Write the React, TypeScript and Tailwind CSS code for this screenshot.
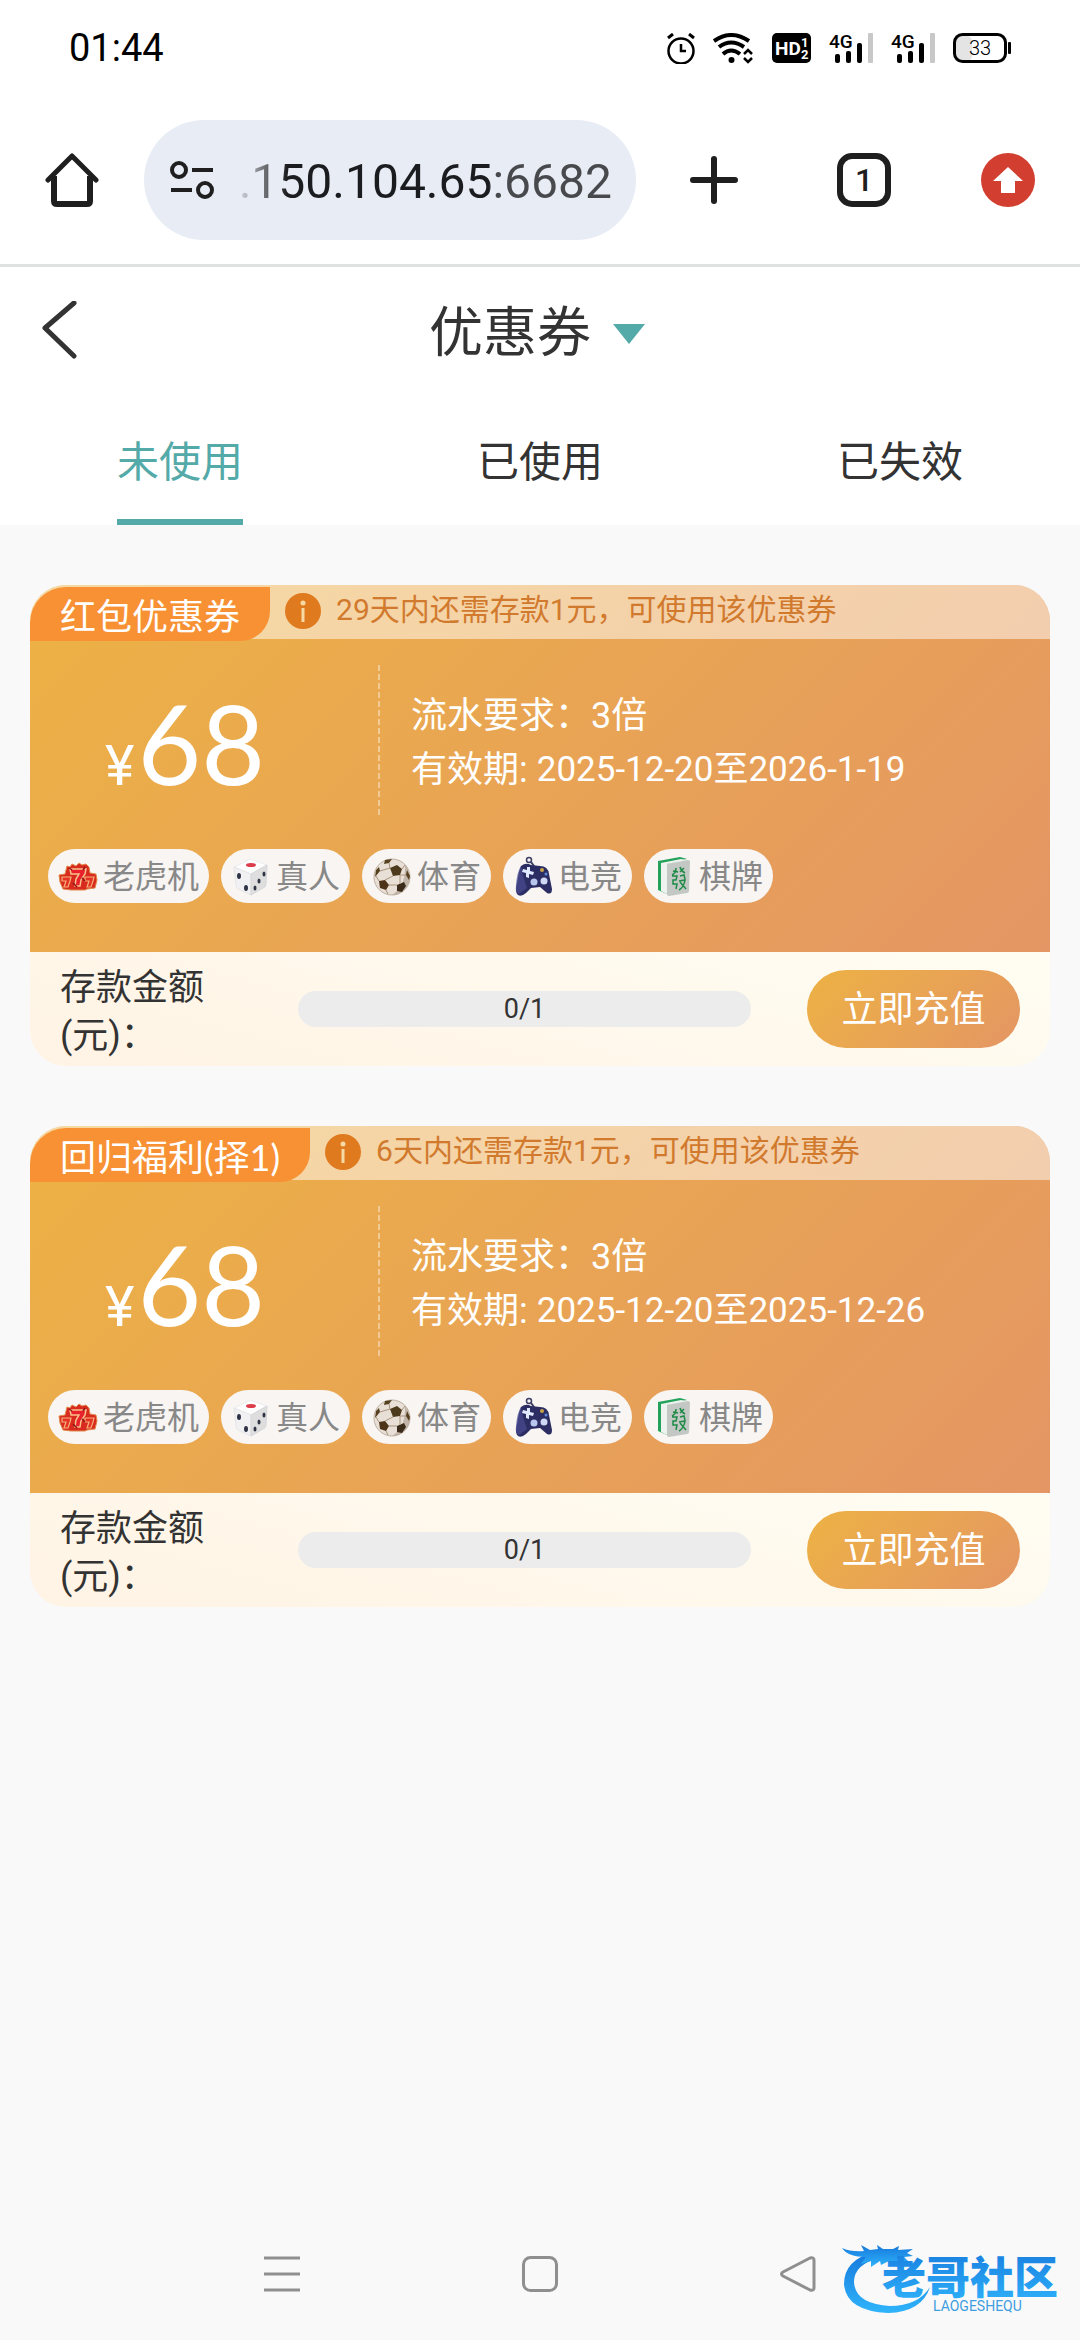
import type { ComponentType } from "react";

interface Coupon {
	id: number;
	title: string;
	notice: string;
	amount: number;
	turnover: string;
	period: string;
	deposited: number;
	target: number;
}

const coupons: Coupon[] = [
	{
		id: 1,
		title: "红包优惠券",
		notice: "29天内还需存款1元，可使用该优惠券",
		amount: 68,
		turnover: "3倍",
		period: "2025-12-20至2026-1-19",
		deposited: 0,
		target: 1,
	},
	{
		id: 2,
		title: "回归福利(择1)",
		notice: "6天内还需存款1元，可使用该优惠券",
		amount: 68,
		turnover: "3倍",
		period: "2025-12-20至2025-12-26",
		deposited: 0,
		target: 1,
	},
];

const tabs = ["未使用", "已使用", "已失效"];

function SlotIcon() {
	return (
		<svg viewBox="0 0 40 40" className="size-[40px]" aria-hidden="true">
			<path
				d="M9 10l3 1 2-3 4 2 3-3 3 2 4-1 3 3 1 6 6 1 1 6-2 8-8 1-2 1-14 0-8-1-3-7-1-7 6-1z"
				fill="#d92a20"
				stroke="#e0894a"
				strokeWidth="1"
			/>
			<path d="M12 13h16l-1 5-4 6-1 6h-5l1-7 3-5h-8z" fill="#e8212c" stroke="#f7c08a" strokeWidth="1.5" />
			<path d="M4 21h9l-1 4-2 6H6l2-6H4z" fill="#e43226" stroke="#f5b277" strokeWidth="1.2" />
			<path d="M27 21h9l-1 4-2 6h-4l2-6h-4z" fill="#e43226" stroke="#f5b277" strokeWidth="1.2" />
			<path d="M11 12l3 2M27 11l-2 3M15 27l4 4M24 22l3 3" stroke="#8f1414" strokeWidth="1.5" />
		</svg>
	);
}

function DiceIcon() {
	return (
		<svg viewBox="0 0 40 40" className="size-[40px]" aria-hidden="true">
			<path d="M3 11L19 3l17 6-16 9z" fill="#fdfdfd" stroke="#ececee" strokeWidth="1" strokeLinejoin="round" />
			<path d="M3 11l17 7v21L7 33q-2-1-2-4z" fill="#f1f1f3" stroke="#e6e6e9" strokeWidth="1" strokeLinejoin="round" />
			<path d="M20 18l16-9-1 19q0 3-3 4l-12 7z" fill="#dededf" stroke="#d6d6da" strokeWidth="1" strokeLinejoin="round" />
			<ellipse cx="20" cy="9" rx="5" ry="2" fill="#dd3c4b" />
			<ellipse cx="8" cy="20" rx="2" ry="3" fill="#2f3445" />
			<ellipse cx="15" cy="32" rx="2" ry="3" fill="#2f3445" />
			<ellipse cx="33" cy="18" rx="1.5" ry="2.5" fill="#2f3445" />
			<ellipse cx="28" cy="25" rx="1.5" ry="2.5" fill="#2f3445" />
			<ellipse cx="24" cy="32" rx="1.5" ry="2.5" fill="#2f3445" />
		</svg>
	);
}

function BallIcon() {
	return (
		<svg viewBox="0 0 40 40" className="size-[40px]" aria-hidden="true">
			<circle cx="20" cy="21" r="18" fill="#e8dfd6" stroke="#bfb1a3" strokeWidth="1" />
			<path d="M33 9a18 18 0 0 1-13 30q14-8 13-30z" fill="#a99a8b" opacity="0.6" />
			<path d="M18 12l7-3 5 4-2 6-7 1z" fill="#4d3a1c" />
			<path d="M7 25l6-1 4 5-3 5-6-2z" fill="#4d3318" />
			<path d="M25 29l7-3 2 4-4 6-5-1z" fill="#3b2b1a" />
			<path d="M13 4l7-1-3 4-5 1zM4 14l3-3 1 4-5 6zM35 14l3 6-1 4-3-5z" fill="#55401f" />
			<path
				d="M17 7l1 5M8 15l10-3M21 20l-8 4M28 19l6 0M28 19l0 9M17 29l8 0M7 25l-3-5M30 13l3-4M16 38l-2-4"
				stroke="#a8937d"
				strokeWidth="1"
				fill="none"
			/>
		</svg>
	);
}

function GamepadIcon() {
	return (
		<svg viewBox="0 0 40 40" className="size-[40px]" aria-hidden="true">
			<circle cx="16" cy="4" r="2.5" fill="none" stroke="#3c3e63" strokeWidth="1.5" />
			<path d="M18 6l3 4" stroke="#3c3e63" strokeWidth="2" />
			<path
				d="M8 10q5-4 10-1l9 1q8 0 9 8l3 15q0 6-5 4l-7-6-9 1-5 5q-6 5-9 1-2-3 0-11l2-11z"
				fill="#2c2d63"
			/>
			<path d="M8 10q-4 6-5 19-1 8 3 9l8-6-4-12z" fill="#4a4c93" opacity="0.7" />
			<path d="M14 11l3 0 0 4 4 1-1 3-4-1 0 4-3-1 0-4-4-1 1-3 4 1z" fill="#dfe9ff" />
			<circle cx="29" cy="14" r="2" fill="#c9a24a" />
			<circle cx="33" cy="18" r="1.5" fill="#5c8bd8" />
			<circle cx="21" cy="26" r="3.5" fill="#b9c6ee" />
			<circle cx="31" cy="25" r="3.5" fill="#cfd8f4" />
		</svg>
	);
}

function TileIcon() {
	return (
		<svg viewBox="0 0 40 40" className="size-[40px]" aria-hidden="true">
			<path d="M4 5l22-4 7 2-20 5v30l-9-4z" fill="#22a25a" />
			<path d="M7 7l20-4 6 1-20 4v30l-6-3z" fill="#eef3ef" />
			<path d="M13 8l21-4q2 0 2 2l-1 29q0 2-2 2l-18 3q-2 0-2-2z" fill="#c3c8c5" />
			<path
				d="M19 15l5 1M22 12q0 5-4 7M26 11q1 4 5 6M30 12l-4 4M18 20l5 0-1 4-3 0 0 4 4 0-1 5M26 20l4-1 1 4M25 25l6-1q-1 7-6 10M26 26l6 7"
				stroke="#1e8a45"
				strokeWidth="1.5"
				fill="none"
			/>
		</svg>
	);
}

const games: { name: string; Icon: ComponentType }[] = [
	{ name: "老虎机", Icon: SlotIcon },
	{ name: "真人", Icon: DiceIcon },
	{ name: "体育", Icon: BallIcon },
	{ name: "电竞", Icon: GamepadIcon },
	{ name: "棋牌", Icon: TileIcon },
];

function SignalIcon() {
	return (
		<svg viewBox="0 0 44 36" className="h-[36px] w-[44px] overflow-visible" aria-label="4G">
			<text x="0" y="18" fontSize="19" fontWeight="500" fontFamily="Roboto, sans-serif">
				4G
			</text>
			<rect x="6" y="24" width="5" height="9" rx="2" />
			<rect x="17" y="21" width="5" height="12" rx="2" />
			<rect x="28" y="13" width="5" height="20" rx="2" />
			<rect x="39" y="3" width="5" height="30" rx="1" fill="#c8c8c8" />
		</svg>
	);
}

function StatusBar() {
	return (
		<div className="flex h-[96px] items-center bg-white px-[69px] text-black">
			<span className="flex-1 text-[38px] leading-[48px]">01:44</span>
			<div className="flex items-center gap-[18px]">
				<svg viewBox="0 0 28 31" className="h-[31px] w-[28px]" fill="none" stroke="#000" aria-label="闹钟">
					<circle cx="14" cy="18" r="12.5" strokeWidth="2.5" />
					<path d="M1 5l5-4M27 5l-5-4" strokeWidth="3" />
					<path d="M14 11v7h5" strokeWidth="2.5" />
				</svg>
				<svg viewBox="0 0 41 31" className="h-[31px] w-[41px]" fill="none" stroke="#000" aria-label="无线网络">
					<path d="M1 8Q18-4 36 8" strokeWidth="4" />
					<path d="M6 14Q18 5 31 14" strokeWidth="4" />
					<path d="M10 21Q18 14 27 21" strokeWidth="4" />
					<circle cx="18.500" cy="27" r="3" fill="#000" stroke="none" />
					<path d="M31 21l4-4 4 4M31 25l4 4 4-4" strokeWidth="2.5" />
				</svg>
				<svg viewBox="0 0 39 31" className="h-[31px] w-[39px]" aria-label="HD">
					<rect width="39" height="30" rx="5" />
					<g fill="#fff" fontFamily="Roboto, sans-serif" fontWeight="700">
						<text x="3" y="22" fontSize="19">
							HD
						</text>
						<text x="29" y="14" fontSize="13">
							1
						</text>
						<text x="29" y="26" fontSize="13">
							2
						</text>
					</g>
				</svg>
				<SignalIcon />
				<SignalIcon />
				<svg viewBox="0 0 58 31" className="h-[31px] w-[58px]" aria-label="电量 33">
					<rect x="3" y="3" width="16" height="25" rx="5" fill="#e4e4e4" />
					<rect x="1.500" y="1.500" width="51" height="27" rx="8" fill="none" stroke="#000" strokeWidth="3" />
					<rect x="55" y="9" width="3" height="12" rx="1" />
					<text x="27" y="22" fontSize="20" fontWeight="300" textAnchor="middle" fontFamily="Roboto, sans-serif">
						33
					</text>
				</svg>
			</div>
		</div>
	);
}

function BrowserBar() {
	return (
		<div className="flex h-[171px] items-center border-b-3 border-[#dfe2e1] bg-white px-[45px] text-[#1f1f1f]">
			<button type="button" aria-label="主页">
				<svg viewBox="0 0 54 54" className="size-[54px]" fill="none" stroke="currentColor">
					<path d="M3 27L27 3l24 24" strokeWidth="5" strokeLinecap="round" strokeLinejoin="round" />
					<path d="M9 23v25q0 3 3 3h30q3 0 3-3V23" strokeWidth="6" />
				</svg>
			</button>
			<div className="ml-[45px] flex h-[120px] min-w-0 flex-1 items-center rounded-full bg-[#e8ecf5] pl-[26px] pr-[24px]">
				<button type="button" aria-label="网站信息">
					<svg viewBox="0 0 44 38" className="h-[38px] w-[44px]" fill="none" stroke="currentColor" strokeWidth="4">
						<circle cx="9" cy="9" r="7" />
						<circle cx="35" cy="29" r="7" />
						<path d="M22 9h21M1 29h21" />
					</svg>
				</button>
				<input
					type="text"
					readOnly
					aria-label="网址"
					value=".150.104.65:6682"
					className="ml-[12px] min-w-0 flex-1 bg-[linear-gradient(90deg,transparent_2%,#6f7074_10%,#1b1c20_16%,#1b1c20_68%,#47494c_69%)] bg-clip-text pt-[3px] text-right text-[48px] leading-[60px] text-transparent outline-none"
				/>
			</div>
			<button type="button" aria-label="新标签页" className="ml-[51px]">
				<svg viewBox="0 0 54 54" className="size-[54px]" stroke="currentColor" strokeWidth="6" strokeLinecap="round">
					<path d="M27 6v42M6 27h42" />
				</svg>
			</button>
			<button
				type="button"
				aria-label="标签页"
				className="ml-[96px] flex size-[54px] items-center justify-center rounded-[15px] border-6 border-current text-[32px] leading-[42px] font-medium"
			>
				1
			</button>
			<button type="button" aria-label="更新" className="ml-[90px]">
				<svg viewBox="0 0 54 54" className="size-[54px]">
					<circle cx="27" cy="27" r="27" fill="#d23f31" />
					<path d="M27 14l15 14h-8v12H20V28h-8z" fill="#fff" />
				</svg>
			</button>
		</div>
	);
}

function PageHeader() {
	return (
		<header className="bg-white text-[#333]">
			<div className="grid h-[126px] grid-cols-[120px_1fr_120px] items-center">
				<button type="button" aria-label="返回" className="pl-[41px]">
					<svg
						viewBox="0 0 36 58"
						className="h-[58px] w-[36px]"
						fill="none"
						stroke="currentColor"
						strokeWidth="5"
						strokeLinecap="round"
						strokeLinejoin="round"
					>
						<path d="M33 2L4 27l29 28" />
					</svg>
				</button>
				<button type="button" className="flex items-center justify-center gap-[22px] pt-[8px] pr-[6px]">
					<span className="text-[54px] leading-[72px]">优惠券</span>
					<svg viewBox="0 0 32 20" className="h-[20px] w-[32px]" aria-hidden="true">
						<path d="M0 0h32L16 20z" fill="#53aaa8" />
					</svg>
				</button>
			</div>
			<nav className="grid h-[132px] grid-cols-3 justify-items-center">
				{tabs.map((tab, i) => (
					<button
						key={tab}
						type="button"
						className={`border-b-6 pt-[14px] text-[42px] leading-[60px] ${i === 0 ? "border-[#53aaa8] text-[#53aaa8]" : "border-transparent"}`}
					>
						{tab}
					</button>
				))}
			</nav>
		</header>
	);
}

function CouponCard({ coupon }: { coupon: Coupon }) {
	const percent = (coupon.deposited / coupon.target) * 100;

	return (
		<section className="overflow-hidden rounded-[36px]">
			<div className="bg-[linear-gradient(135deg,#edb244,#e49664)] pb-[49px] text-white">
				<div className="flex h-[54px] items-start bg-white/50">
					<h2 className="mt-[2px] rounded-tl-[36px] rounded-br-[30px] bg-[#f89134] px-[30px] pt-[4px] font-[Lato,'Noto_Sans_CJK_SC',sans-serif] text-[36px] leading-[50px]">
						{coupon.title}
					</h2>
					<svg viewBox="0 0 36 36" className="mt-[8px] ml-[15px] size-[36px]" aria-hidden="true">
						<circle cx="18" cy="18" r="18" fill="#e07a1f" />
						<circle cx="18" cy="10" r="2.5" fill="#f6d9a3" />
						<path d="M18 15v14" stroke="#f6d9a3" strokeWidth="3" />
					</svg>
					<p className="ml-[15px] text-[30px] leading-[50px] text-[#d17a2e]">{coupon.notice}</p>
				</div>

				<div className="mt-[26px] flex h-[150px]">
					<p className="flex w-[348px] items-baseline gap-[3px] pl-[75px] leading-[154px]">
						<span className="text-[56px]">¥</span>
						<span className="font-[Lato] text-[110px]">{coupon.amount}</span>
					</p>
					<svg className="h-full w-[2px]" aria-hidden="true">
						<path d="M1 0v150" stroke="#fff" strokeOpacity="0.4" strokeWidth="2" strokeDasharray="6 3" />
					</svg>
					<dl className="pt-[24px] pl-[31px] text-[36px] leading-[54px]">
						<div className="flex">
							<dt>流水要求：</dt>
							<dd>{coupon.turnover}</dd>
						</div>
						<div className="flex">
							<dt className="mr-[9px]">有效期:</dt>
							<dd className="text-[35px]">{coupon.period}</dd>
						</div>
					</dl>
				</div>

				<ul className="mt-[34px] flex gap-[12px] pl-[18px]">
					{games.map(({ name, Icon }) => (
						<li
							key={name}
							className="flex h-[54px] items-center gap-[5px] rounded-full bg-[#f8f5f2] px-[10px] text-[32px] leading-[48px] text-[#888]"
						>
							<Icon />
							<span className="pt-[2px]">{name}</span>
						</li>
					))}
				</ul>
			</div>

			<div className="flex h-[114px] items-center bg-[linear-gradient(15deg,#fff3e4,#fffdf3)] px-[30px]">
				<span className="w-[238px] pt-[5px] text-[36px] leading-[48px] text-[#333]">
					存款金额
					<br />
					(元)：
				</span>
				<div
					role="progressbar"
					aria-label="存款金额"
					aria-valuenow={coupon.deposited}
					aria-valuemax={coupon.target}
					className="grid h-[36px] flex-1 overflow-hidden rounded-full bg-[#ececec]"
				>
					<div className="col-start-1 row-start-1 bg-[#edb244]" style={{ width: `${percent}%` }} />
					<span className="col-start-1 row-start-1 text-center text-[27px] leading-[36px] text-[#333]">
						{coupon.deposited}/{coupon.target}
					</span>
				</div>
				<button
					type="button"
					className="ml-[56px] h-[78px] w-[213px] rounded-full bg-[linear-gradient(135deg,#edb244,#e49664)] pt-[2px] text-[36px] leading-[54px] text-white"
				>
					立即充值
				</button>
			</div>
		</section>
	);
}

function CommunityLogo() {
	return (
		<svg viewBox="0 0 224 78" className="absolute right-[14px] bottom-[22px] h-[78px] w-[224px]" aria-label="老哥社区">
			<defs>
				<linearGradient id="logo-blue" x1="0" y1="0" x2="0" y2="1">
					<stop offset="0" stopColor="#1678dc" />
					<stop offset="1" stopColor="#2fb4fb" />
				</linearGradient>
			</defs>
			<path
				d="M32 12Q2 20 2 44q2 27 44 29 34-1 42-26-12 19-40 19Q13 64 12 42q0-18 26-24z"
				fill="url(#logo-blue)"
			/>
			<path
				d="M0 8q9 4 22 3l-3-6 9 5 8-1-1-4 6 4 10 0 6-3-1 4 15-1-6 4 6 3-9 1 5 5-11-2-3 4-6-3-8 4-1-4-9 6 0-6-10 3 5-7q-18 0-24-9z"
				fill="url(#logo-blue)"
			/>
			<text
				x="40"
				y="54"
				fontSize="44"
				fontWeight="900"
				fontFamily="'Noto Sans CJK SC', sans-serif"
				fill="url(#logo-blue)"
			>
				老哥社区
			</text>
			<text x="91" y="71" fontSize="14" fontFamily="Roboto, sans-serif" fill="#3d9de0">
				LAOGESHEQU
			</text>
		</svg>
	);
}

function SystemNav() {
	return (
		<nav className="relative mt-auto flex h-[132px] items-center justify-center gap-[222px] text-[#8f8f8f]">
			<button type="button" aria-label="最近任务">
				<svg viewBox="0 0 36 36" className="size-[36px]" stroke="currentColor" strokeWidth="3">
					<path d="M0 2h36M0 18h36M0 34h36" />
				</svg>
			</button>
			<button type="button" aria-label="主屏幕">
				<svg viewBox="0 0 36 36" className="size-[36px]" fill="none" stroke="currentColor" strokeWidth="3">
					<rect x="1.500" y="1.500" width="33" height="33" rx="7" />
				</svg>
			</button>
			<button type="button" aria-label="返回上一级">
				<svg
					viewBox="0 0 36 36"
					className="size-[36px]"
					fill="none"
					stroke="currentColor"
					strokeWidth="3"
					strokeLinejoin="round"
				>
					<path d="M3 16L30 2q4-1 4 2v28q0 3-4 2L3 20q-3-2 0-4z" />
				</svg>
			</button>
			<CommunityLogo />
		</nav>
	);
}

export default function App() {
	return (
		<div className="flex min-h-screen flex-col bg-[#f9f9f9] font-[Roboto,'Noto_Sans_CJK_SC',sans-serif]">
			<StatusBar />
			<BrowserBar />
			<PageHeader />
			<main className="flex flex-col gap-[60px] px-[30px] pt-[60px]">
				{coupons.map((coupon) => (
					<CouponCard key={coupon.id} coupon={coupon} />
				))}
			</main>
			<SystemNav />
		</div>
	);
}
